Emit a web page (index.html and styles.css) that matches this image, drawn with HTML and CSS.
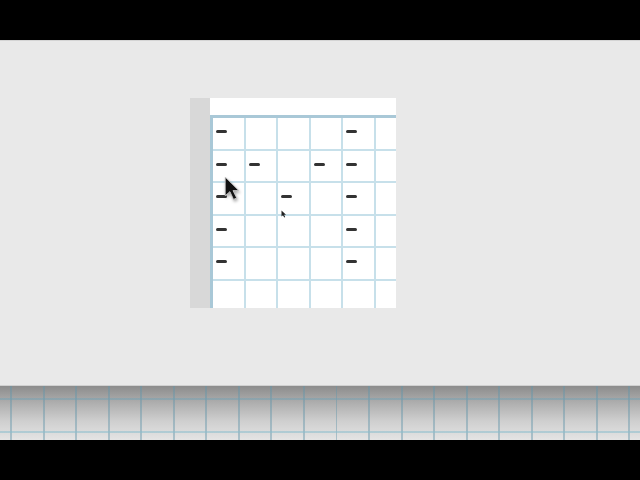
FILE: index.html
```html
<!DOCTYPE html>
<html>
<head>
<meta charset="utf-8">
<link rel="stylesheet" href="styles.css">
</head>
<body>
<div class="screen">
  <div class="topbar"></div>
  <div class="panel">
    <div class="card">
      <div class="side"></div>
      <div class="main">
        <div class="header"></div>
        <div class="grid">
          <div class="cell"><span class="dash"></span></div><div class="cell"></div><div class="cell"></div><div class="cell"></div><div class="cell"><span class="dash"></span></div><div class="cell"></div>
          <div class="cell"><span class="dash"></span></div><div class="cell"><span class="dash"></span></div><div class="cell"></div><div class="cell"><span class="dash"></span></div><div class="cell"><span class="dash"></span></div><div class="cell"></div>
          <div class="cell"><span class="dash"></span></div><div class="cell"></div><div class="cell"><span class="dash"></span></div><div class="cell"></div><div class="cell"><span class="dash"></span></div><div class="cell"></div>
          <div class="cell"><span class="dash"></span></div><div class="cell"></div><div class="cell"></div><div class="cell"></div><div class="cell"><span class="dash"></span></div><div class="cell"></div>
          <div class="cell"><span class="dash"></span></div><div class="cell"></div><div class="cell"></div><div class="cell"></div><div class="cell"><span class="dash"></span></div><div class="cell"></div>
          <div class="cell"></div><div class="cell"></div><div class="cell"></div><div class="cell"></div><div class="cell"></div><div class="cell"></div>
        </div>
      </div>
    </div>
    <svg class="cursor-big" width="17" height="25" viewBox="0 0 16 24">
      <path d="M1 1 L1 19 L5.5 15 L9 22.5 L12 21 L8.5 14 L14 14 Z" fill="#111" stroke="#cfcfcf" stroke-width="0.8" stroke-linejoin="round"/>
    </svg>
    <svg class="cursor-small" width="6" height="8" viewBox="0 0 6 8">
      <path d="M0.5 0.5 L0.5 6.5 L2 5.2 L3.2 7.5 L4.2 7 L3 4.8 L5 4.8 Z" fill="#222"/>
    </svg>
  </div>
  <div class="strip"></div>
  <div class="bottombar"></div>
</div>
</body>
</html>
```
FILE: styles.css
```css
html, body {
  margin: 0;
  padding: 0;
  background: #000;
}
.screen {
  width: 640px;
  height: 480px;
  display: flex;
  flex-direction: column;
}
.topbar {
  height: 40px;
  background: #000;
}
.panel {
  position: relative;
  height: 345px;
  background: #e9e9e9;
  border-top: 1px solid #d4d4d4;
  box-sizing: border-box;
  padding-top: 57px;
  padding-left: 190px;
}
.card {
  display: flex;
  width: 206px;
  height: 210px;
}
.side {
  flex: 0 0 20px;
  background: #d8d8d8;
}
.main {
  flex: 1;
  min-width: 0;
  display: flex;
  flex-direction: column;
  background: #fff;
  overflow: hidden;
}
.header {
  height: 17px;
  background: #fff;
}
.grid {
  flex: 1;
  min-height: 0;
  display: grid;
  grid-template-columns: repeat(6, 32.6px);
  grid-template-rows: repeat(6, 32.6px);
  border-top: 3px solid #a9c8d7;
  border-left: 3px solid #a9c8d7;
  overflow: hidden;
  background: #fff;
}
.cell {
  box-sizing: border-box;
  border-right: 2px solid #c7e0ea;
  border-bottom: 2px solid #c7e0ea;
  padding: 12px 0 0 3px;
}
.dash {
  display: block;
  width: 11px;
  height: 3px;
  border-radius: 1.5px;
  background: #333;
}
.cursor-big {
  position: absolute;
  left: 224px;
  top: 135px;
  filter: drop-shadow(1px 2px 1.5px rgba(0,0,0,0.35));
}
.cursor-small {
  position: absolute;
  left: 281px;
  top: 169px;
}
.strip {
  height: 55px;
  border-top: 1px solid #d0d0d0;
  box-sizing: border-box;
  background:
    linear-gradient(to bottom, transparent 12px, rgba(110,160,180,0.45) 12px, rgba(110,160,180,0.45) 14px, transparent 14px),
    linear-gradient(to bottom, transparent 45px, rgba(140,190,205,0.55) 45px, rgba(140,190,205,0.55) 47px, transparent 47px),
    repeating-linear-gradient(to right, transparent 0, transparent 10px, rgba(100,150,170,0.45) 10px, rgba(100,150,170,0.45) 12px, transparent 12px, transparent 32.55px),
    linear-gradient(to bottom, #8c8c8c 0%, #adadad 30%, #cfcfcf 65%, #e4e4e4 100%);
}
.bottombar {
  height: 40px;
  background: #000;
}
```
